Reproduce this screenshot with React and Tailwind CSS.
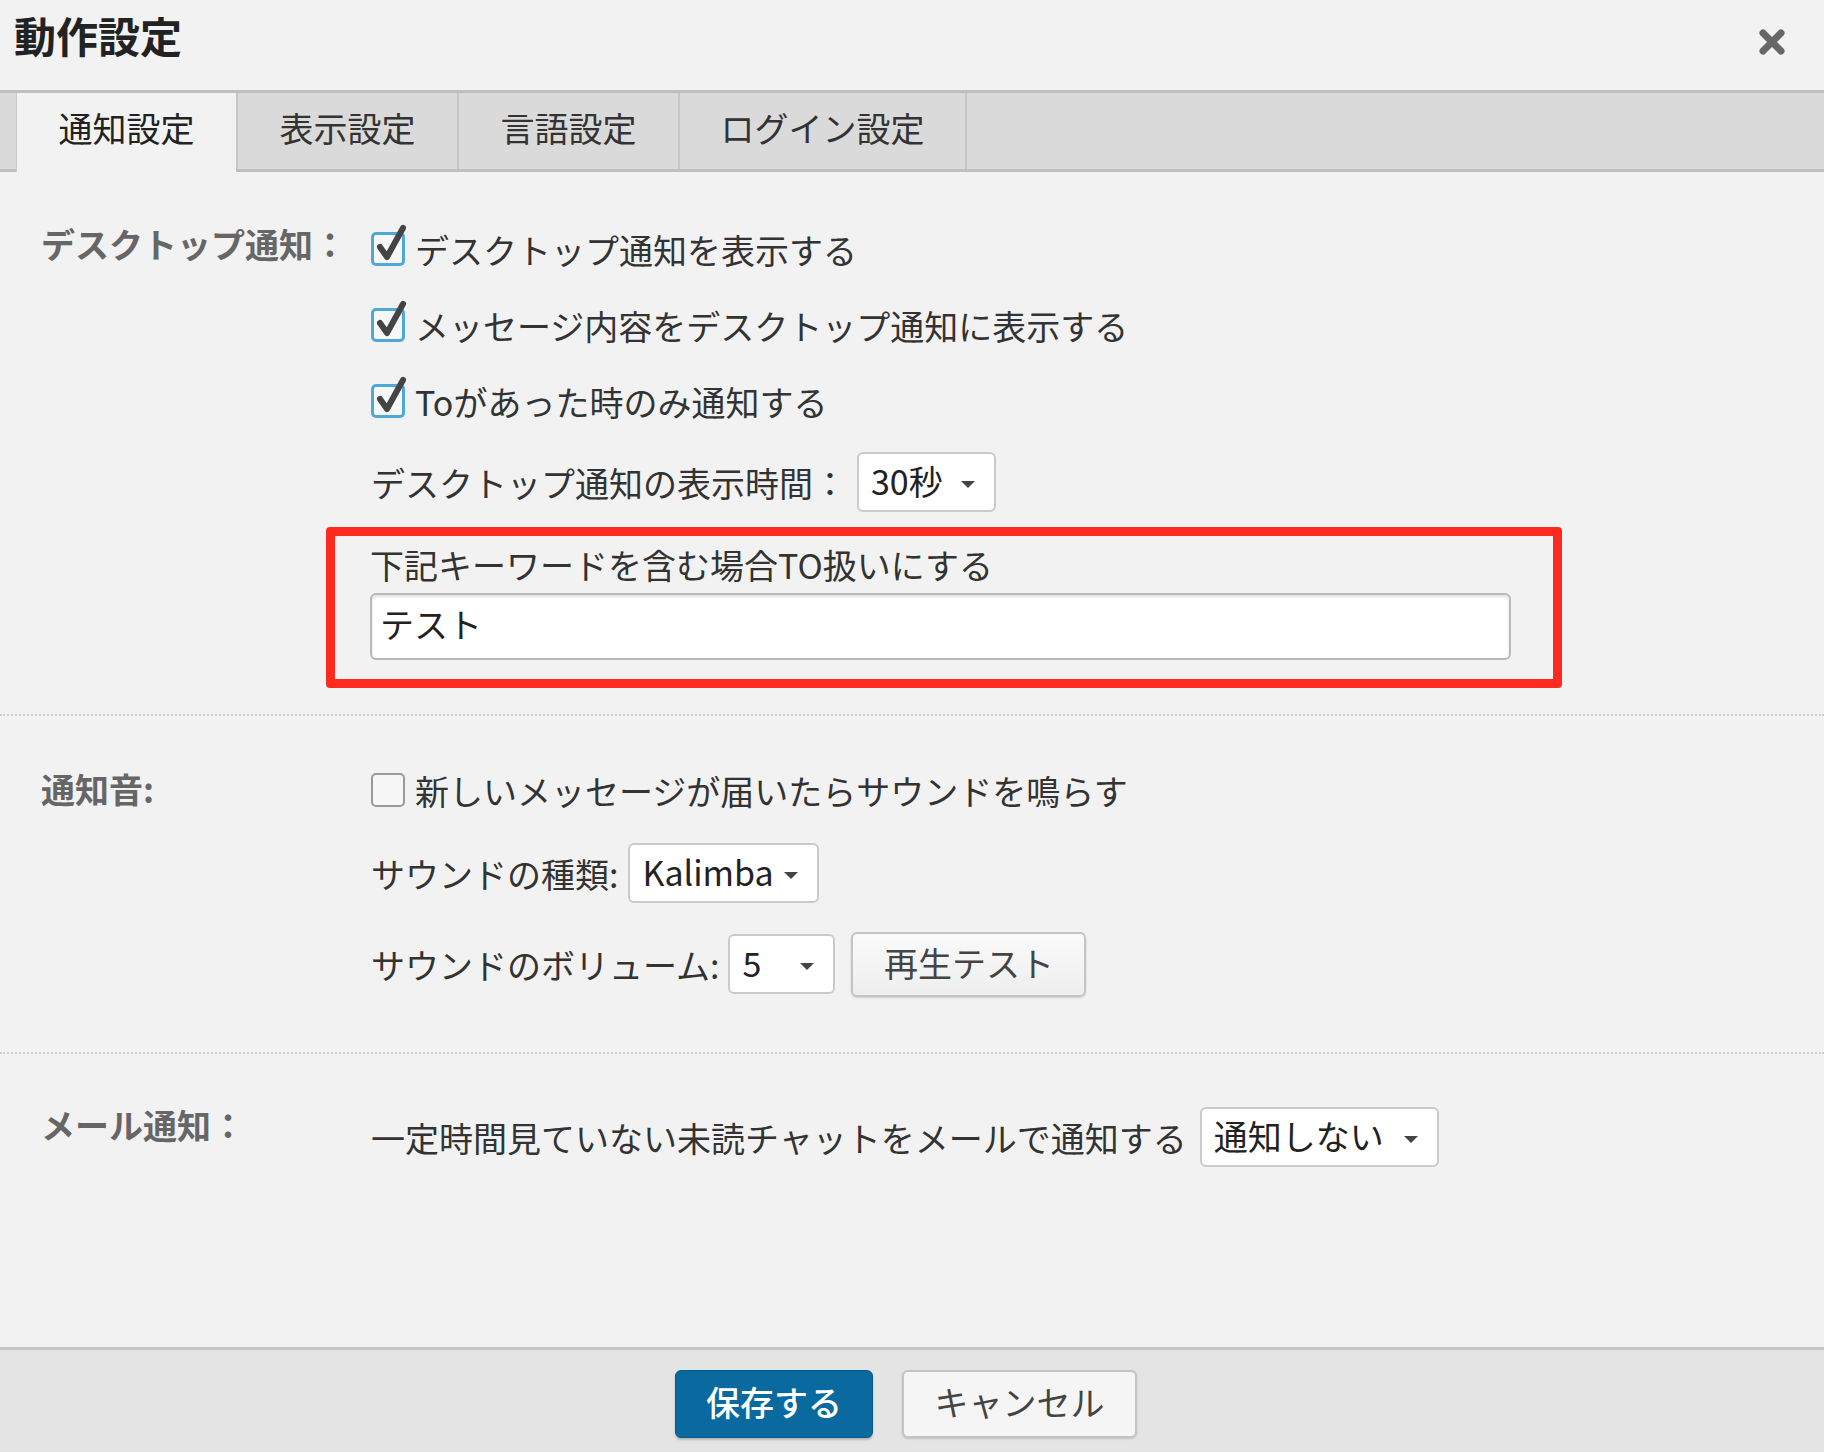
import React from "react";

function Check({ checked }) {
  return (
    <div className="relative w-[34px] h-[34px] shrink-0">
      <div
        className={
          checked
            ? "w-[34px] h-[34px] rounded-[5px] border-[3px] border-[#4ea9d6] bg-[#f7f7f7]"
            : "w-[34px] h-[34px] rounded-[5px] border-2 border-[#9a9a9a] bg-[#f7f7f7]"
        }
      />
      {checked && (
        <svg
          className="absolute left-[3px] top-[-8px]"
          width="34"
          height="40"
          viewBox="0 0 34 40"
        >
          <path
            d="M6 23 L13 33 L29 4"
            fill="none"
            stroke="#444"
            strokeWidth="6"
            strokeLinecap="round"
            strokeLinejoin="round"
          />
        </svg>
      )}
    </div>
  );
}

function Caret() {
  return (
    <svg width="16" height="9" viewBox="0 0 16 9" className="shrink-0 mt-[4px]">
      <path d="M1 1 L15 1 L8 8 Z" fill="#444" />
    </svg>
  );
}

function Select({ value, w, className = "" }) {
  return (
    <div
      className={
        "h-[60px] bg-white border-2 border-[#cacaca] rounded-[6px] flex items-center justify-between pl-[12px] pr-[18px] text-[#222] " +
        w +
        " " +
        className
      }
    >
      <span className="leading-none pb-[3px]">{value}</span>
      <Caret />
    </div>
  );
}

export default function App() {
  return (
    <div className="w-[1824px] h-[1452px] bg-[#f2f2f2] flex flex-col font-['Noto_Sans_CJK_JP','Noto_Sans',sans-serif] text-[34px] text-[#333] overflow-hidden">
      {/* header */}
      <div className="h-[90px] shrink-0 flex items-center justify-between pl-[14px] pr-[38px] pb-[20px]">
        <div className="text-[42px] font-bold text-[#222] leading-none">動作設定</div>
        <svg width="28" height="28" viewBox="0 0 28 28" className="mt-[14px]">
          <path
            d="M5 5 L23 23 M23 5 L5 23"
            stroke="#666"
            strokeWidth="7"
            strokeLinecap="round"
          />
        </svg>
      </div>

      {/* tabs */}
      <div className="h-[82px] shrink-0 bg-[#dadada] border-t-[3px] border-b-[3px] border-[#bfbfbf] flex pl-[16px]">
        <div className="w-[220px] h-[79px] -mb-[3px] bg-[#f2f2f2] border-l border-[#c8c8c8] flex items-center justify-center text-[#222] pb-[10px]">
          通知設定
        </div>
        <div className="w-[221px] border-l-2 border-[#c6c6c6] flex items-center justify-center text-[#333] pb-[8px]">
          表示設定
        </div>
        <div className="w-[221px] border-l-2 border-[#c6c6c6] flex items-center justify-center text-[#333] pb-[8px]">
          言語設定
        </div>
        <div className="w-[289px] border-l-2 border-r-2 border-[#c6c6c6] flex items-center justify-center text-[#333] pb-[8px]">
          ログイン設定
        </div>
      </div>

      {/* section 1 */}
      <div className="flex pt-[39px] pb-[26px] border-b-2 border-dotted border-[#cfcfcf]">
        <div className="w-[371px] shrink-0 pl-[41px] h-[64px] flex items-center font-bold text-[#666] whitespace-nowrap">
          デスクトップ通知：
        </div>
        <div className="flex flex-col">
          <div className="h-[76px] flex items-center gap-[10px]">
            <Check checked />
            <span>デスクトップ通知を表示する</span>
          </div>
          <div className="h-[76px] flex items-center gap-[10px]">
            <Check checked />
            <span>メッセージ内容をデスクトップ通知に表示する</span>
          </div>
          <div className="h-[76px] flex items-center gap-[10px]">
            <Check checked />
            <span>Toがあった時のみ通知する</span>
          </div>
          <div className="h-[86px] flex items-center">
            <span>デスクトップ通知の表示時間：</span>
            <Select value="30秒" w="w-[139px]" className="ml-[10px]" />
          </div>
          <div className="-ml-[45px] mt-[2px] w-[1236px] h-[161px] border-[9px] border-[#ff2a1f] rounded-[4px] pl-[35px] pt-[8px]">
            <div className="h-[40px] flex items-center">下記キーワードを含む場合TO扱いにする</div>
            <div className="mt-[9px] w-[1141px] h-[67px] bg-white border-2 border-[#b9b9b9] rounded-[6px] shadow-[inset_0_2px_3px_rgba(0,0,0,0.12)] flex items-center pl-[8px] pb-[6px] text-[#222]">
              テスト
            </div>
          </div>
        </div>
      </div>

      {/* section 2 */}
      <div className="flex pt-[44px] pb-[55px] border-b-2 border-dotted border-[#cfcfcf]">
        <div className="w-[371px] shrink-0 pl-[41px] h-[56px] flex items-center font-bold text-[#666] whitespace-nowrap">
          通知音:
        </div>
        <div className="flex flex-col">
          <div className="h-[60px] flex items-center gap-[10px]">
            <Check />
            <span>新しいメッセージが届いたらサウンドを鳴らす</span>
          </div>
          <div className="mt-[23px] h-[60px] flex items-center">
            <span>サウンドの種類:</span>
            <Select value="Kalimba" w="w-[191px]" className="ml-[10px]" />
          </div>
          <div className="mt-[28px] h-[66px] flex items-center">
            <span>サウンドのボリューム:</span>
            <Select value="5" w="w-[107px]" className="ml-[9px]" />
            <div className="ml-[16px] w-[235px] h-[65px] rounded-[6px] border-2 border-[#c4c4c4] bg-gradient-to-b from-[#fafafa] to-[#eeeeee] shadow-[0_1px_2px_rgba(0,0,0,0.15)] flex items-center justify-center text-[#444] pb-[4px]">
              再生テスト
            </div>
          </div>
        </div>
      </div>

      {/* section 3 */}
      <div className="flex flex-1 pt-[53px]">
        <div className="w-[371px] shrink-0 pl-[41px] h-[40px] mt-[-3px] flex items-center font-bold text-[#666] whitespace-nowrap">
          メール通知：
        </div>
        <div className="h-[60px] flex items-center">
          <span>一定時間見ていない未読チャットをメールで通知する</span>
          <Select value="通知しない" w="w-[239px]" className="ml-[13px]" />
        </div>
      </div>

      {/* footer */}
      <div className="h-[105px] shrink-0 bg-[#e4e4e4] border-t-[3px] border-[#c6c6c6] flex justify-center pt-[20px] gap-[29px] pr-[12px]">
        <div className="w-[198px] h-[68px] rounded-[6px] bg-[#0a6aa0] border border-[#085a88] shadow-[0_2px_2px_rgba(0,0,0,0.2)] flex items-center justify-center text-white font-medium pb-[5px]">
          保存する
        </div>
        <div className="w-[235px] h-[68px] rounded-[6px] bg-[#f5f5f5] border-2 border-[#c4c4c4] shadow-[0_1px_2px_rgba(0,0,0,0.15)] flex items-center justify-center text-[#444] pb-[5px]">
          キャンセル
        </div>
      </div>
    </div>
  );
}
